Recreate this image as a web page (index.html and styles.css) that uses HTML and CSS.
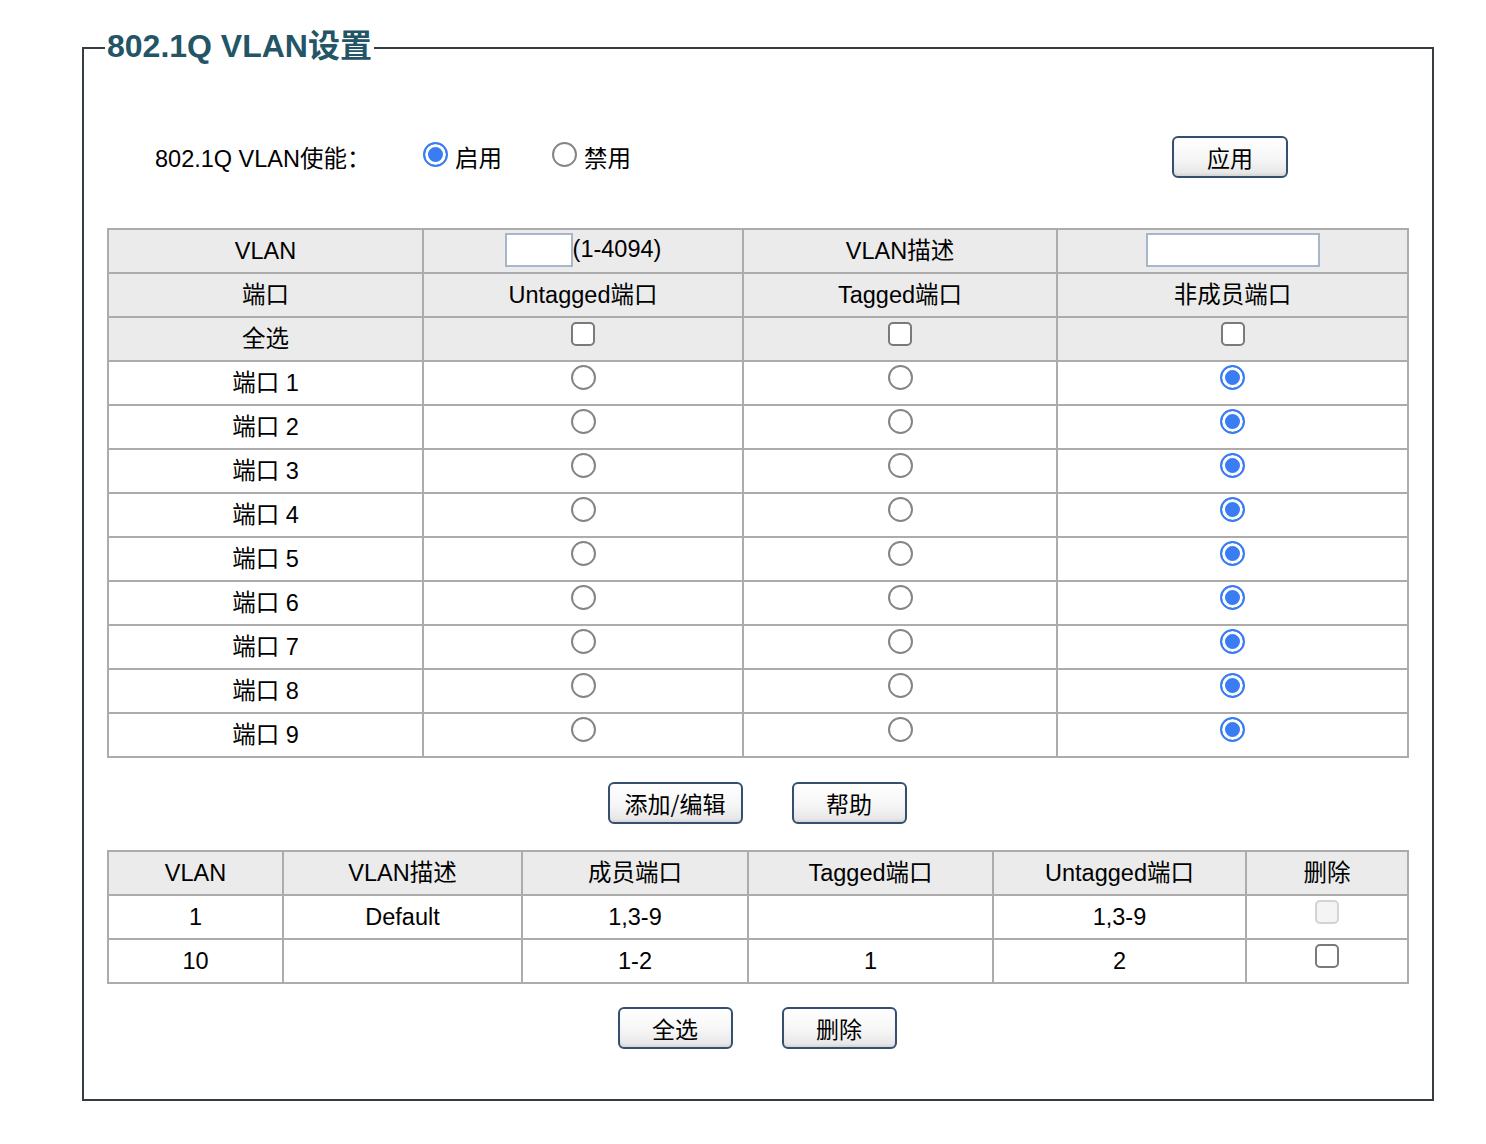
FILE: index.html
```html
<!DOCTYPE html>
<html lang="zh-CN">
<head>
<meta charset="utf-8">
<title>802.1Q VLAN设置</title>
<link rel="stylesheet" href="styles.css">
</head>
<body>
<fieldset class="panel">
  <legend class="panel-title">802.1Q VLAN设置</legend>

  <div class="enable-row">
    <span class="enable-label">802.1Q VLAN使能：</span>
    <label class="opt"><input type="radio" class="radio" name="qvlan" checked><span>启用</span></label>
    <label class="opt"><input type="radio" class="radio" name="qvlan"><span>禁用</span></label>
    <button class="btn btn-apply" type="button">应用</button>
  </div>

  <table class="grid port-table">
    <colgroup>
      <col style="width:315px"><col style="width:320px"><col style="width:314px"><col style="width:351px">
    </colgroup>
    <tr class="head">
      <td>VLAN</td>
      <td><input type="text" class="field field-id"><span>(1-4094)</span></td>
      <td>VLAN描述</td>
      <td><input type="text" class="field field-desc"></td>
    </tr>
    <tr class="head">
      <td>端口</td><td>Untagged端口</td><td>Tagged端口</td><td>非成员端口</td>
    </tr>
    <tr class="head">
      <td>全选</td>
      <td><input type="checkbox" class="check"></td>
      <td><input type="checkbox" class="check"></td>
      <td><input type="checkbox" class="check"></td>
    </tr>
    <tr><td>端口 1</td><td><input type="radio" class="radio" name="p1"></td><td><input type="radio" class="radio" name="p1"></td><td><input type="radio" class="radio" name="p1" checked></td></tr>
    <tr><td>端口 2</td><td><input type="radio" class="radio" name="p2"></td><td><input type="radio" class="radio" name="p2"></td><td><input type="radio" class="radio" name="p2" checked></td></tr>
    <tr><td>端口 3</td><td><input type="radio" class="radio" name="p3"></td><td><input type="radio" class="radio" name="p3"></td><td><input type="radio" class="radio" name="p3" checked></td></tr>
    <tr><td>端口 4</td><td><input type="radio" class="radio" name="p4"></td><td><input type="radio" class="radio" name="p4"></td><td><input type="radio" class="radio" name="p4" checked></td></tr>
    <tr><td>端口 5</td><td><input type="radio" class="radio" name="p5"></td><td><input type="radio" class="radio" name="p5"></td><td><input type="radio" class="radio" name="p5" checked></td></tr>
    <tr><td>端口 6</td><td><input type="radio" class="radio" name="p6"></td><td><input type="radio" class="radio" name="p6"></td><td><input type="radio" class="radio" name="p6" checked></td></tr>
    <tr><td>端口 7</td><td><input type="radio" class="radio" name="p7"></td><td><input type="radio" class="radio" name="p7"></td><td><input type="radio" class="radio" name="p7" checked></td></tr>
    <tr><td>端口 8</td><td><input type="radio" class="radio" name="p8"></td><td><input type="radio" class="radio" name="p8"></td><td><input type="radio" class="radio" name="p8" checked></td></tr>
    <tr><td>端口 9</td><td><input type="radio" class="radio" name="p9"></td><td><input type="radio" class="radio" name="p9"></td><td><input type="radio" class="radio" name="p9" checked></td></tr>
  </table>

  <div class="btn-row">
    <button class="btn btn-wide" type="button">添加/编辑</button>
    <button class="btn" type="button">帮助</button>
  </div>

  <table class="grid vlan-table">
    <colgroup>
      <col style="width:175px"><col style="width:239px"><col style="width:226px"><col style="width:245px"><col style="width:253px"><col style="width:162px">
    </colgroup>
    <tr class="head">
      <td>VLAN</td><td>VLAN描述</td><td>成员端口</td><td>Tagged端口</td><td>Untagged端口</td><td>删除</td>
    </tr>
    <tr>
      <td>1</td><td>Default</td><td>1,3-9</td><td></td><td>1,3-9</td><td><input type="checkbox" class="check" disabled></td>
    </tr>
    <tr>
      <td>10</td><td></td><td>1-2</td><td>1</td><td>2</td><td><input type="checkbox" class="check"></td>
    </tr>
  </table>

  <div class="btn-row btn-row-last">
    <button class="btn" type="button">全选</button>
    <button class="btn" type="button">删除</button>
  </div>
</fieldset>
</body>
</html>
```

FILE: styles.css
```css
body {
  margin: 0;
  background: #ffffff;
  color: #000000;
  font-family: "Liberation Sans", Arial, "Noto Sans CJK SC", sans-serif;
  font-size: 23.5px;
}

/* outer frame with its title sitting on the top border */
.panel {
  box-sizing: border-box;
  width: 1352px;
  margin: 31px 0 0 82px;
  padding: 0;
  border: 2px solid #363d42;
  min-width: 0;
}

.panel-title {
  margin-left: 21px;
  padding: 0 2px 4px;
  font-size: 32px;
  line-height: 30px;
  font-weight: bold;
  color: #235566;
}

/* enable / disable row */
.enable-row {
  display: flex;
  align-items: center;
  height: 42px;
  margin-top: 71px;
  padding-left: 71px;
}

.enable-label {
  width: 268px;
}

.opt {
  display: flex;
  align-items: center;
  gap: 7px;
}

.opt + .opt {
  margin-left: 50px;
}

.opt .radio {
  margin-bottom: 6px;
}

.btn-apply {
  margin-left: auto;
  margin-right: 144px;
}

/* form controls */
.radio {
  appearance: none;
  -webkit-appearance: none;
  box-sizing: border-box;
  width: 25px;
  height: 25px;
  margin: 0;
  border: 2px solid #858585;
  border-radius: 50%;
  background: #ffffff;
  vertical-align: middle;
}

.radio:checked {
  border-color: #3a7cf2;
  background: #3a7cf2;
  box-shadow: inset 0 0 0 3px #ffffff;
}

.check {
  appearance: none;
  -webkit-appearance: none;
  box-sizing: border-box;
  width: 24px;
  height: 24px;
  margin: 0;
  border: 2px solid #7a7a7a;
  border-radius: 5px;
  background: #ffffff;
  vertical-align: middle;
}

.check:disabled {
  border-color: #d3d3d3;
  background: #f4f4f4;
}

.field {
  box-sizing: border-box;
  height: 34px;
  margin: 0;
  padding: 0 4px;
  border: 2px solid #a7b6c8;
  background: #ffffff;
  font: inherit;
  vertical-align: middle;
}

.field-id {
  width: 68px;
}

.field-desc {
  width: 174px;
}

/* data grids */
.grid {
  table-layout: fixed;
  width: 1300px;
  margin-left: 23px;
  border-collapse: collapse;
}

.port-table {
  margin-top: 50px;
}

.grid td {
  height: 42px;
  padding: 0;
  border: 2px solid #acacac;
  text-align: center;
  vertical-align: middle;
  line-height: 24px;
}

.grid tr.head td {
  background: #ebebeb;
}

.grid td .radio,
.grid td .check {
  transform: translateY(-6px);
}

.grid td .field {
  transform: translateY(-1px);
}

/* push buttons */
.btn {
  box-sizing: border-box;
  width: 115px;
  height: 42px;
  padding: 0;
  border: 2px solid #35506f;
  border-radius: 6px;
  background: linear-gradient(#ffffff 0%, #f6f6f6 55%, #e4e4e4 100%);
  box-shadow: inset 0 -2px 2px rgba(0, 0, 0, 0.06);
  color: #000000;
  font-family: "Noto Sans CJK SC", "Liberation Sans", sans-serif;
  font-size: 23px;
  line-height: 38px;
}

.btn-apply {
  width: 116px;
}

.btn-wide {
  width: 135px;
}

.btn-row {
  display: flex;
  justify-content: center;
  gap: 49px;
  width: 1300px;
  margin: 24px 0 26px 23px;
}

.btn-row-last {
  margin: 23px 0 50px 23px;
}
```
